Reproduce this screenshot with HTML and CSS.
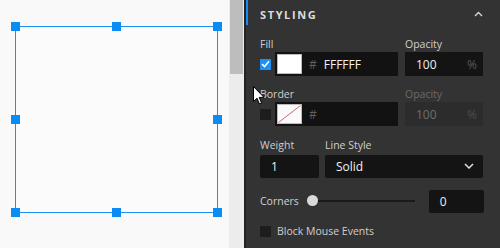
FILE: index.html
```html
<!DOCTYPE html>
<html lang="en">
<head>
  <meta charset="UTF-8" />
  <title>Styling panel</title>
  <link rel="stylesheet" href="styles.css">
</head>
<body>
  <div class="canvas">
    <div class="shape">
      <span class="handle h-tl"></span>
      <span class="handle h-tm"></span>
      <span class="handle h-tr"></span>
      <span class="handle h-ml"></span>
      <span class="handle h-mr"></span>
      <span class="handle h-bl"></span>
      <span class="handle h-bm"></span>
      <span class="handle h-br"></span>
    </div>
  </div>

  <div class="scrollbar"><div class="thumb"></div></div>

  <aside class="panel">
    <div class="panel-head">
      <span class="title">Styling</span>
      <svg class="chev" width="9" height="6" viewBox="0 0 9 6"><path d="M1 5 L4.5 1.5 L8 5" fill="none" stroke="#d8d8d8" stroke-width="1.4"/></svg>
    </div>

    <div class="panel-body">
      <div class="labels first">
        <span class="lbl lbl-main">Fill</span>
        <span class="lbl">Opacity</span>
      </div>
      <div class="row">
        <span class="check on">
          <svg width="9" height="8" viewBox="0 0 9 8"><path d="M1 4 L3.5 6.5 L8 1.2" fill="none" stroke="#fff" stroke-width="1.6"/></svg>
        </span>
        <div class="color-field">
          <span class="swatch"></span>
          <span class="hash">#</span>
          <span class="hex">FFFFFF</span>
        </div>
        <div class="num-field">
          <span>100</span>
          <span class="unit">%</span>
        </div>
      </div>

      <div class="labels second">
        <span class="lbl lbl-main">Border</span>
        <span class="lbl off">Opacity</span>
      </div>
      <div class="row">
        <span class="check"></span>
        <div class="color-field">
          <span class="swatch none">
            <svg width="23" height="18" viewBox="0 0 23 18"><path d="M0.5 17.5 L22.5 0.5" stroke="#c9687e" stroke-width="1"/></svg>
          </span>
          <span class="hash">#</span>
          <span class="hex"></span>
        </div>
        <div class="num-field disabled">
          <span>100</span>
          <span class="unit">%</span>
        </div>
      </div>

      <div class="labels third">
        <span class="lbl">Weight</span>
        <span class="lbl">Line Style</span>
      </div>
      <div class="row">
        <div class="text-field weight">1</div>
        <div class="text-field select">
          <span>Solid</span>
          <svg width="10" height="6" viewBox="0 0 10 6"><path d="M1 1 L5 5 L9 1" fill="none" stroke="#e0e0e0" stroke-width="1.5"/></svg>
        </div>
      </div>

      <div class="row corners">
        <span class="lbl">Corners</span>
        <div class="slider"><span class="knob"></span></div>
        <div class="text-field radius">0</div>
      </div>

      <div class="row block">
        <span class="check"></span>
        <span class="lbl">Block Mouse Events</span>
      </div>
    </div>

    <svg class="cursor" width="12" height="19" viewBox="0 0 12 19"><path d="M0.5 0.5 L0.5 15.5 L4 12.2 L6.5 18 L8.6 17.1 L6.2 11.4 L11 11.4 Z" fill="#fff" stroke="#000" stroke-width="1"/></svg>
  </aside>
</body>
</html>
```

FILE: styles.css
```css
* {
  margin: 0;
  padding: 0;
  box-sizing: border-box;
}
body {
  width: 500px;
  height: 248px;
  display: flex;
  overflow: hidden;
  font-family: 'Open Sans', sans-serif;
  background: #f9f9f9;
}
.canvas {
  width: 229px;
  height: 248px;
  background: #f9f9f9;
  padding: 26px 0 0 15px;
}
.shape {
  position: relative;
  width: 203px;
  height: 187px;
  border: 1.5px solid #1e90f5;
  background: #fbfbfb;
}
.handle {
  position: absolute;
  width: 9px;
  height: 9px;
  background: #0a8cf5;
}
.h-tl { left: -5px; top: -5px; }
.h-tm { left: 96px; top: -5px; }
.h-tr { right: -5px; top: -5px; }
.h-ml { left: -5px; top: 88px; }
.h-mr { right: -5px; top: 88px; }
.h-bl { left: -5px; bottom: -5px; }
.h-bm { left: 96px; bottom: -5px; }
.h-br { right: -5px; bottom: -5px; }

.scrollbar {
  width: 15px;
  height: 248px;
  background: #ececec;
  padding: 0 1px;
}
.thumb {
  height: 74px;
  background: #bdbdbd;
}

.panel {
  position: relative;
  flex: 1;
  background: #333333;
  border-left: 2px solid #232323;
  color: #d6d6d6;
}
.panel-head {
  position: relative;
  height: 29px;
  display: flex;
  justify-content: space-between;
  align-items: center;
  padding: 0 17px 0 14px;
}
.panel-head::before {
  content: "";
  position: absolute;
  left: 0;
  top: 0;
  width: 2px;
  height: 25px;
  background: #1a8cf0;
}
.title {
  text-transform: uppercase;
  font-weight: 700;
  font-size: 11px;
  letter-spacing: 1.6px;
  color: #dcdcdc;
}
.chev { margin-top: -1px; }

.panel-body {
  padding: 0 15px 0 14px;
}
.labels {
  display: flex;
  align-items: flex-end;
  line-height: 14px;
}
.labels.first { height: 23px; padding-bottom: 1px; }
.labels.second { height: 26px; padding-bottom: 1px; }
.labels.third { height: 28px; padding-bottom: 2px; }
.lbl {
  font-size: 10.5px;
  color: #cfcfcf;
}
.lbl-main { width: 145px; }
.lbl.off { color: #6a6a6a; }
.third .lbl:first-child { width: 65px; }

.row {
  display: flex;
  align-items: center;
  height: 24px;
}
.check {
  width: 11px;
  height: 11px;
  background: #1d1d1d;
  margin-right: 4px;
  display: flex;
  align-items: center;
  justify-content: center;
}
.check.on { background: #1e8ff5; }

.color-field {
  width: 123px;
  height: 24px;
  background: #121212;
  display: flex;
  align-items: center;
  padding-left: 2px;
  margin-right: 7px;
}
.swatch {
  width: 25px;
  height: 20px;
  background: #fff;
  border: 1px solid #bcbcbc;
  margin-right: 7px;
  display: flex;
}
.swatch.none { background: #fafafa; }
.hash {
  font-size: 12px;
  color: #5e5e5e;
  margin-right: 7px;
}
.hex {
  font-size: 12px;
  color: #f2f2f2;
}
.num-field {
  width: 78px;
  height: 24px;
  background: #141414;
  display: flex;
  align-items: center;
  justify-content: space-between;
  padding: 0 6px 0 11px;
  font-size: 12px;
  color: #f0f0f0;
}
.num-field .unit { color: #5a5a5a; }
.num-field.disabled {
  background: #2c2c2c;
  color: #6e6e6e;
}
.num-field.disabled .unit { color: #4c4c4c; }

.text-field {
  height: 23px;
  background: #141414;
  border-radius: 2px;
  display: flex;
  align-items: center;
  font-size: 12px;
  color: #f0f0f0;
  padding-left: 11px;
}
.weight { width: 59px; margin-right: 6px; }
.select {
  width: 158px;
  justify-content: space-between;
  padding-right: 9px;
}
.corners {
  margin-top: 11px;
}
.slider {
  position: relative;
  width: 102px;
  height: 2px;
  background: #1a1a1a;
  margin: 0 14px 0 14px;
}
.knob {
  position: absolute;
  left: -6px;
  top: -5px;
  width: 11px;
  height: 11px;
  border-radius: 50%;
  background: #d9d9d9;
}
.radius { width: 55px; padding-left: 11px; }

.block {
  margin-top: 6px;
  height: 24px;
}
.block .check { margin-right: 6px; }

.cursor {
  position: absolute;
  left: 7px;
  top: 86px;
}
```
